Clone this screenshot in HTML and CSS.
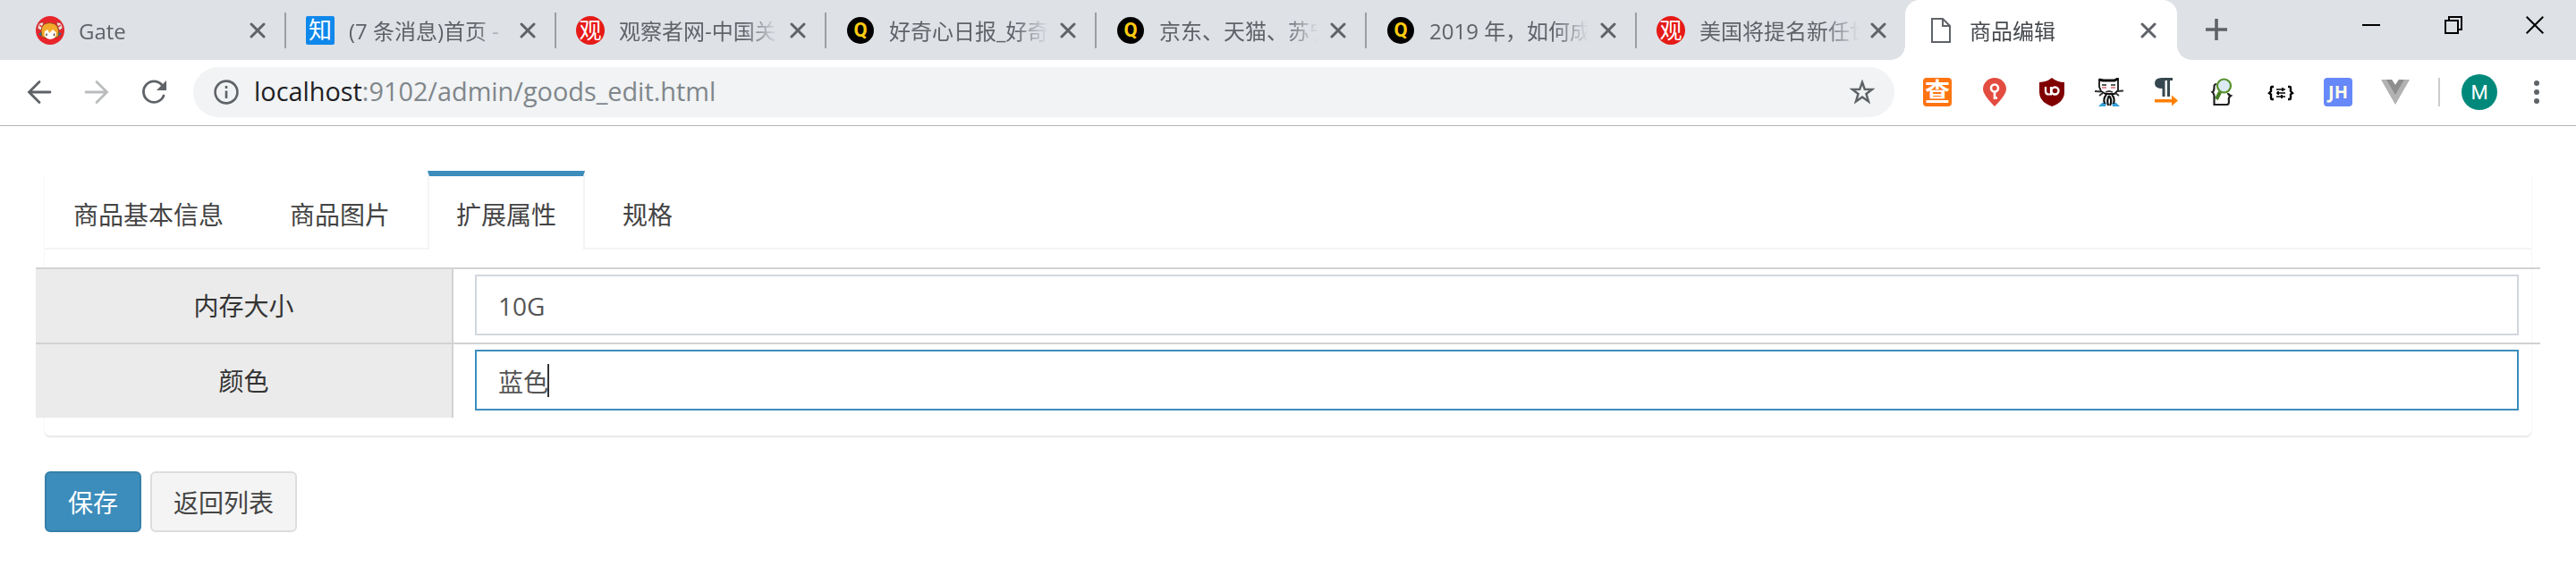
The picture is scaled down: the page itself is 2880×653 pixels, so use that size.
FILE: index.html
```html
<!DOCTYPE html>
<html lang="zh-CN">
<head>
<meta charset="utf-8">
<title>商品编辑</title>
<link rel="stylesheet" href="styles.css">
</head>
<body>
<svg class="defs" aria-hidden="true">
  <symbol id="x" viewBox="0 0 18 18"><path d="M2 2L16 16M16 2L2 16" stroke="#5f6368" stroke-width="3" stroke-linecap="round" fill="none"/></symbol>
  <symbol id="gate" viewBox="0 0 32 32">
    <circle cx="16" cy="16" r="16" fill="#e8252b"/>
    <path d="M2 14q0-8 7-7l-3 9zM30 14q0-8-7-7l3 9z" fill="#f3dcd8" stroke="#a33" stroke-width=".8"/>
    <path d="M4 10l3 2M28 10l-3 2" stroke="#e8252b" stroke-width="1.500"/>
    <path d="M3 20l4-3v6zM29 20l-4-3v6z" fill="#2f7186"/>
    <path d="M7 23Q3 8 15.500 7.500Q28 8 25 23L22 24H10z" fill="#f5a92c" stroke="#7d4522" stroke-width=".8"/>
    <path d="M10 17l3.500-2 1.500 4 4-4 3.500 3q1.500 7-6.500 8-8-1-6-9z" fill="#fff"/>
    <path d="M12 19.500v2.500M20.500 19.500v2.500" stroke="#333" stroke-width="1.300"/>
  </symbol>
</svg>
<header class="strip">
  <div class="tab"><svg class="fav"><use href="#gate"/></svg><span class="title">Gate</span><svg class="close"><use href="#x"/></svg></div>
  <div class="tab"><span class="fav zhi">知</span><span class="title">(7 条消息)首页 -</span><svg class="close"><use href="#x"/></svg></div>
  <div class="tab"><span class="fav guan">观</span><span class="title">观察者网-中国关</span><svg class="close"><use href="#x"/></svg></div>
  <div class="tab"><span class="fav qdaily">Q</span><span class="title">好奇心日报_好奇</span><svg class="close"><use href="#x"/></svg></div>
  <div class="tab"><span class="fav qdaily">Q</span><span class="title">京东、天猫、苏宁</span><svg class="close"><use href="#x"/></svg></div>
  <div class="tab"><span class="fav qdaily">Q</span><span class="title">2019 年，如何成</span><svg class="close"><use href="#x"/></svg></div>
  <div class="tab last"><span class="fav guan">观</span><span class="title">美国将提名新任世</span><svg class="close"><use href="#x"/></svg></div>
  <div class="tab current">
    <svg class="fav" viewBox="0 0 32 32"><path d="M6 3H18L26 11V29H6zM18 3V11H26" fill="none" stroke="#5f6368" stroke-width="2"/></svg>
    <span class="title">商品编辑</span><svg class="close"><use href="#x"/></svg>
  </div>
  <svg class="plus" viewBox="0 0 24 24"><path d="M12 0V24M0 12H24" stroke="#5f6368" stroke-width="3.600"/></svg>
  <div class="window-buttons">
    <svg viewBox="0 0 20 20"><path d="M0 10H20" stroke="#000" stroke-width="2"/></svg>
    <svg viewBox="0 0 20 20"><path d="M1 5H15V19H1zM5 5V1H19V15H15" fill="none" stroke="#000" stroke-width="2"/></svg>
    <svg viewBox="0 0 20 20"><path d="M.7 .7L19.3 19.3M19.3 .7L.7 19.3" stroke="#000" stroke-width="2"/></svg>
  </div>
</header>
<nav class="toolbar">
  <div class="nav-buttons">
    <svg viewBox="0 0 32 32"><path d="M28 16H5M16 4.500L4.500 16L16 27.500" fill="none" stroke="#5f6368" stroke-width="2.800" stroke-linecap="round"/></svg>
    <svg viewBox="0 0 32 32"><path d="M4 16H27M16 4.500L27.500 16L16 27.500" fill="none" stroke="#babcbe" stroke-width="2.800" stroke-linecap="round"/></svg>
    <svg viewBox="0 0 32 32"><path d="M25 8A11.700 11.700 0 1 0 27 20" fill="none" stroke="#5f6368" stroke-width="2.800" stroke-linecap="round"/><path d="M30 3V14H19z" fill="#5f6368"/></svg>
  </div>
  <div class="address">
    <svg class="info" viewBox="0 0 28 28"><circle cx="14" cy="14" r="12.400" fill="none" stroke="#5f6368" stroke-width="2.600"/><path d="M14 12.500V21M14 7V10" stroke="#5f6368" stroke-width="2.600"/></svg>
    <span class="url"><b>localhost</b>:9102/admin/goods_edit.html</span>
    <svg class="star" viewBox="0 0 28 28"><path d="M14 3L16.800 10.800L25 11L18.500 16L21 24.500L14 19.500L7 24.500L9.500 16L3 11L11.200 10.800z" fill="none" stroke="#5f6368" stroke-width="2.500"/></svg>
  </div>
  <div class="extensions">
    <span class="ext cha">查</span>
    <svg class="ext" viewBox="0 0 32 32"><path d="M16 32Q3 19 3 12.500a13 12.500 0 0 1 26 0Q29 19 16 32z" fill="#e34c40"/><circle cx="16" cy="11.500" r="4" fill="none" stroke="#fff" stroke-width="2.600"/><path d="M16 15V24M16 22.500h3" stroke="#fff" stroke-width="2.600"/></svg>
    <svg class="ext" viewBox="0 0 32 32"><path d="M16 0Q22 5 30 5V16Q30 27 16 32Q2 27 2 16V5Q10 5 16 0z" fill="#800000"/><path d="M9 10V15Q9 18.500 12.500 18.500H15V10" fill="none" stroke="#fff" stroke-width="2.200"/><circle cx="19.500" cy="14.500" r="4" fill="none" stroke="#fff" stroke-width="2.400"/></svg>
    <svg class="ext" viewBox="0 0 32 32">
      <path d="M5 2V10L7 15L12 18H22L26 14V1L21 3H10z" fill="#fff" stroke="#111" stroke-width="1.800"/>
      <path d="M5 2L9 3H22L26 1" stroke="#111" stroke-width="3" fill="none"/>
      <path d="M8 8h5M18 8h5" stroke="#222" stroke-width="1.500"/>
      <path d="M8 11h5M18 11h5" stroke="#e58c94" stroke-width="2"/>
      <path d="M0 15l7 .5M25 15l7-.5M5 20l4-3M27 20l-4-3M12 16l4-1 4 1" stroke="#333" stroke-width="1.800" fill="none"/>
      <path d="M4 32l4-4h5l-1 4zM19 28l5 0 4 4h-8z" fill="#36a2d9"/>
      <path d="M13 19q-4 4-2 10M19 19q4 4 2 10M16 20q-3 5-1 11M16 20q4 5 1 11" stroke="#111" stroke-width="2.200" fill="none"/>
    </svg>
    <svg class="ext" viewBox="0 0 32 32"><path d="M23 0V3H20V21H17V3H14.500V21H11.500V12Q3 12 3 6Q3 0 11 0z" fill="#37474f"/><path d="M3 24H22V19.500L29 25.500L22 31.500V27.500H3z" fill="#ff8000"/></svg>
    <svg class="ext" viewBox="0 0 32 32"><path d="M8 7Q5 7 5.500 11Q5.500 15 3.500 16Q6 18 5.500 23V30H20Q22 30 22 26Q21 22 24 20Q21 19 21 17" fill="none" stroke="#222" stroke-width="2.200"/><path d="M12 16L8 24" stroke="#477f23" stroke-width="4"/><circle cx="16.500" cy="9" r="7.500" fill="#dbeaf5" stroke="#55902b" stroke-width="2.200"/></svg>
    <svg class="ext" viewBox="0 0 32 32"><path d="M8 10H6Q5 10 5 12V15L3 17L5 18.500V22Q5 24 6 24H8M24 10H26Q27 10 27 12V15L29 17L27 18.500V22Q27 24 26 24H24" fill="none" stroke="#000" stroke-width="2.400"/><path d="M11 13H21M11 17H21M11 21H21" stroke="#000" stroke-width="1.600"/><path d="M18 11V15M13 15V19M17 19V23" stroke="#000" stroke-width="1.800"/></svg>
    <span class="ext jh">JH</span>
    <svg class="ext" viewBox="0 0 32 32"><path d="M0 2H12L16 8L20 2H32L16 30z" fill="#b2b2b2"/><path d="M6 2H12L16 8L20 2H26L16 19z" fill="#8e8e8e"/></svg>
  </div>
  <span class="divider"></span>
  <span class="avatar">M</span>
  <svg class="more" viewBox="0 0 6 26"><g fill="#5f6368"><circle cx="3" cy="3" r="3"/><circle cx="3" cy="13" r="3"/><circle cx="3" cy="23" r="3"/></g></svg>
</nav>
<main>
  <section class="card">
    <ul class="nav-tabs">
      <li>商品基本信息</li>
      <li>商品图片</li>
      <li class="active">扩展属性</li>
      <li>规格</li>
    </ul>
    <div class="rows">
      <div class="row"><label>内存大小</label><div class="field"><div class="input">10G</div></div></div>
      <div class="row"><label>颜色</label><div class="field"><div class="input focused">蓝色<i class="caret"></i></div></div></div>
    </div>
  </section>
  <div class="actions"><button class="primary">保存</button><button>返回列表</button></div>
</main>
</body>
</html>
```
FILE: styles.css
```css
* { box-sizing: border-box; }
body { margin: 0; background: #fff; font-family: "Open Sans", "Noto Sans CJK SC", sans-serif; overflow: hidden; }
svg { display: block; flex: none; }
.defs { position: absolute; width: 0; height: 0; }

.strip { display: flex; height: 67px; padding-left: 18px; background: #dee1e6; }
.tab { display: flex; align-items: center; flex: none; width: 302px; height: 67px; padding-left: 22px; color: #5f6368; background: linear-gradient(#9b9fa4, #9b9fa4) right 14px / 2px 40px no-repeat; }
.tab.last { background: none; width: 300px; }
.fav { width: 32px; height: 32px; flex: none; display: block; text-align: center; }
.zhi { background: #0f88eb; color: #fff; font-size: 26px; line-height: 31px; border-radius: 2px; }
.guan { background: #e61a17; color: #fff; font-size: 25px; line-height: 31px; border-radius: 50%; }
.qdaily { width: 30px; height: 30px; margin: 0 1px; background: #000; color: #fc1; border-radius: 50%; font: 700 22px/29px Roboto, sans-serif; }
.title { flex: none; width: 192px; margin-left: 16px; font-size: 24px; line-height: 36px; padding-top: 2px; white-space: nowrap; -webkit-mask-image: linear-gradient(90deg, #000 140px, transparent 178px); mask-image: linear-gradient(90deg, #000 140px, transparent 178px); }
.close { width: 18px; height: 18px; margin-left: -1px; }
.tab.current { position: relative; width: 304px; padding-left: 24px; background: #fff; border-radius: 16px 16px 0 0; color: #45494d; }
.tab.current::before, .tab.current::after { content: ""; position: absolute; bottom: 0; width: 16px; height: 16px; }
.tab.current::before { left: -16px; background: radial-gradient(circle at 0 0, transparent 15.5px, #fff 16px); }
.tab.current::after { right: -16px; background: radial-gradient(circle at 100% 0, transparent 15.5px, #fff 16px); }
.plus { width: 24px; height: 24px; margin: 21px 0 0 32px; }
.window-buttons { display: flex; gap: 71.5px; margin: 18px 36px 0 auto; }
.window-buttons svg { width: 20px; height: 20px; }

.toolbar { display: flex; align-items: center; height: 74px; padding: 0 41px 2px 28px; border-bottom: 1px solid #b2b2b2; }
.nav-buttons { display: flex; gap: 32px; width: 188px; flex: none; }
.nav-buttons svg { width: 32px; height: 32px; }
.address { display: flex; align-items: center; flex: none; width: 1902px; height: 56px; border-radius: 28px; background: #f1f3f4; padding: 0 22px 0 23px; }
.info { width: 28px; height: 28px; }
.url { margin-left: 17px; padding-bottom: 2px; font-size: 28.85px; line-height: 40px; color: #80868b; white-space: nowrap; }
.url b { font-weight: 400; color: #202124; }
.star { width: 28px; height: 28px; margin-left: auto; }
.extensions { display: flex; gap: 32px; margin-left: 32px; }
.ext { width: 32px; height: 32px; flex: none; text-align: center; }
.cha { background: #ff7410; color: #fff; border-radius: 4px; font-size: 28px; line-height: 30px; font-weight: 700; }
.jh { background: #6688f8; color: #fffce8; border-radius: 4px; font: 700 20px/32px "Noto Sans", sans-serif; }
.divider { width: 2px; height: 32px; background: #ccc; margin-left: 32px; }
.avatar { width: 40px; height: 40px; margin-left: 24px; border-radius: 50%; background: #00897b; color: #fff; font: 22px/41px Roboto, sans-serif; text-align: center; }
.more { width: 6px; height: 26px; margin-left: auto; }

main { padding: 50px 50px 0; font-size: 28px; }
.card { height: 296px; border-radius: 6px; box-shadow: 0 2px 2px rgba(0, 0, 0, .1); }
.nav-tabs { display: flex; gap: 10px; height: 88px; margin: 0; padding: 0; list-style: none; border-bottom: 2px solid #f4f4f4; color: #444; }
.nav-tabs li { height: 88px; padding: 6px 30px 0; border: 0 solid transparent; border-width: 0 2px; line-height: 87px; white-space: nowrap; }
.nav-tabs .active { padding-top: 0; border-top: 6px solid #3c8dbc; border-left-color: #f4f4f4; border-right-color: #f4f4f4; background: #fff; }
.rows { margin: 20px -10px 0; }
.row { display: flex; height: 84px; border-top: 2px solid #d2d2d2; }
.row label { width: 467px; flex: none; background: #ebebeb; border-right: 2px solid #d2d2d2; color: #333; line-height: 82px; text-align: center; }
.field { flex: 1; padding: 6px 24px 0; }
.input { display: flex; align-items: center; height: 68px; border: 2px solid #d2d6de; padding: 1px 24px 0; color: #555; background: #fff; }
.input.focused { border-color: #3c8dbc; }
.caret { width: 2px; height: 37px; background: #333; margin-left: -1px; }
.actions { display: flex; gap: 10px; margin-top: 40px; }
button { height: 68px; padding: 1px 24px 0; border: 2px solid #ddd; border-radius: 6px; background: #f4f4f4; color: #444; font: inherit; line-height: 60px; white-space: nowrap; }
.primary { background: #3c8dbc; border-color: #367fa9; color: #fff; }
```
